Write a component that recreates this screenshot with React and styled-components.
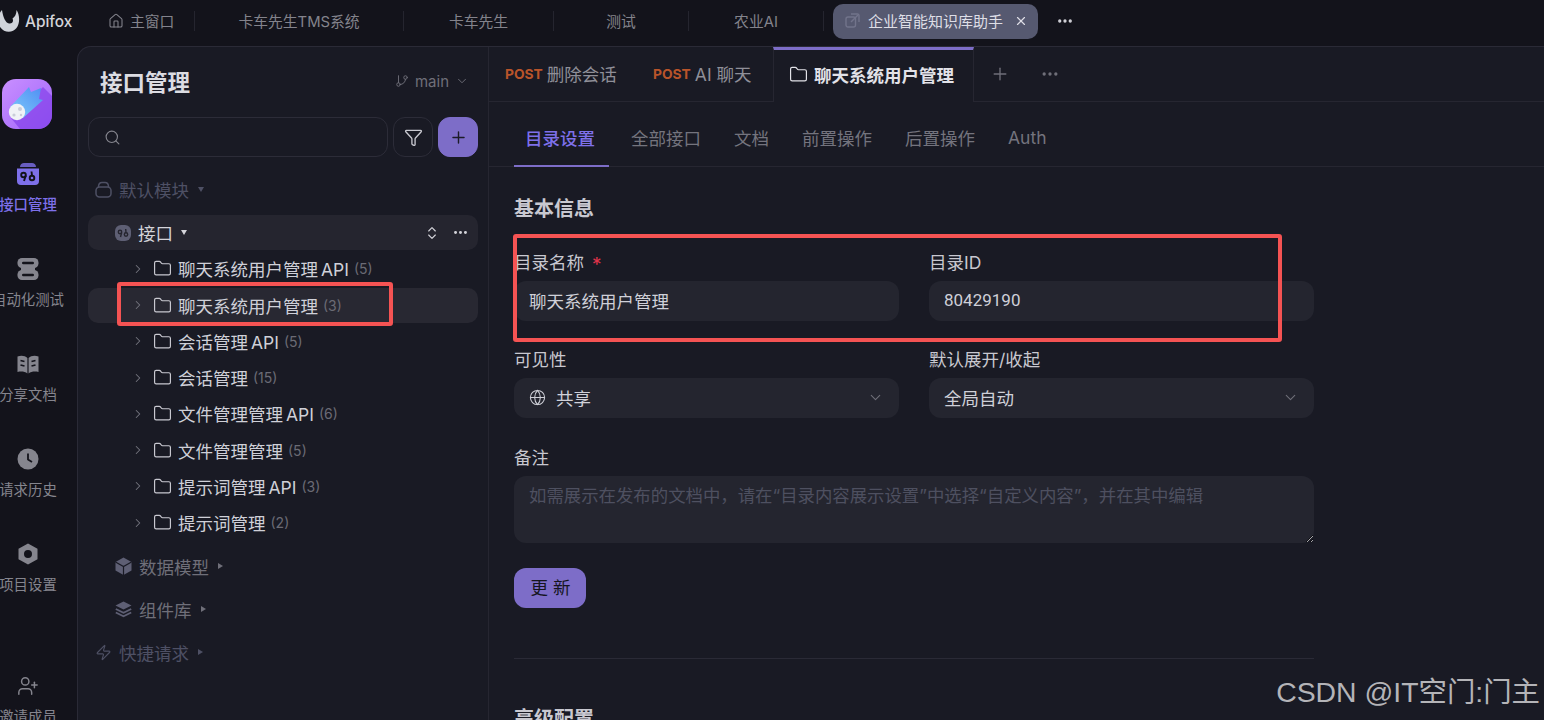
import React from 'react';
import styled, { createGlobalStyle } from 'styled-components';
import {
  ChevronDown,
  ChevronRight,
  ChevronsUpDown,
  Ellipsis,
  Folder,
  Funnel,
  GitBranch,
  Globe,
  House,
  Plus,
  Search,
  UserPlus,
  X,
  Zap,
} from 'lucide-react';

const FONT = `Inter, "Noto Sans CJK SC", "Noto Sans", sans-serif`;

const GlobalStyle = createGlobalStyle`
  html, body {
    margin: 0;
    padding: 0;
    background: #13131b;
    font-family: ${FONT};
  }
  * {
    box-sizing: border-box;
  }
`;

const Root = styled.div`
  position: relative;
  display: flex;
  flex-direction: column;
  width: 100%;
  height: 100vh;
  overflow: hidden;
  background: #13131b;
`;

const TopBar = styled.header`
  display: flex;
  align-items: center;
  flex: none;
  height: 46px;
  padding-bottom: 4px;
  color: #83838c;
  font-size: 14.8px;
`;

const Brand = styled.div`
  display: flex;
  align-items: center;
  flex: none;
  width: 110px;
  gap: 5px;
  margin-left: -2px;
  color: #d4d4da;
  font-size: 15.4px;
  font-weight: 500;
`;

const HomeTab = styled.div`
  display: flex;
  align-items: center;
  flex: none;
  width: 86px;
  gap: 6px;
  padding-bottom: 1px;
`;

const TopTab = styled.div`
  flex: none;
  width: ${(p) => p.$width}px;
  padding-bottom: 1px;
  text-align: center;
  white-space: nowrap;
`;

const TopDivider = styled.span`
  flex: none;
  width: 1px;
  height: 20px;
  background: #25252f;
`;

const ActiveTopTab = styled.div`
  display: flex;
  align-items: center;
  flex: none;
  width: 205px;
  height: 35px;
  margin-left: 9px;
  padding: 0 0 1px 12px;
  gap: 8px;
  border-radius: 10px;
  background: #565970;
  color: #dedee6;
  font-size: 15px;
  white-space: nowrap;
`;

const TopClose = styled(X)`
  margin-left: 3px;
  color: #dedee6;
`;

const TopMore = styled(Ellipsis)`
  margin-left: 18px;
  color: #d4d4da;
`;

const Body = styled.div`
  display: flex;
  flex: 1;
  min-height: 0;
`;

const Rail = styled.nav`
  display: flex;
  flex-direction: column;
  flex: none;
  width: 77px;
  padding-top: 33px;
  overflow: hidden;
`;

const AppLogo = styled.svg`
  display: block;
  flex: none;
  margin-left: 2px;
  margin-bottom: 33px;
`;

const RailItem = styled.div`
  display: flex;
  flex-direction: column;
  align-items: center;
  flex: none;
  width: 56px;
  height: 95px;
  margin-top: ${(p) => p.$offset || 0}px;
  gap: 9px;
  color: ${(p) => (p.$active ? '#7e70ea' : '#85858e')};
`;

const RailIcon = styled.span`
  display: flex;
  align-items: center;
  justify-content: center;
  height: 24px;
`;

const RailLabel = styled.span`
  font-size: 14.4px;
  font-weight: ${(p) => (p.$active ? 500 : 400)};
  line-height: 20px;
  white-space: nowrap;
`;

const Workspace = styled.div`
  display: flex;
  flex: 1;
  min-width: 0;
  border-top: 1px solid #2a2a36;
  border-left: 1px solid #2a2a36;
  border-top-left-radius: 14px;
  background: #191a24;
`;

const TreePane = styled.aside`
  flex: none;
  width: 411px;
  padding: 0 10px;
  border-right: 1px solid #262631;
`;

const PaneHeader = styled.div`
  display: flex;
  align-items: center;
  justify-content: space-between;
  height: 70px;
  padding: 0 9px 2px 12px;
`;

const PaneTitle = styled.h2`
  margin: 0;
  color: #dcdce2;
  font-size: 22.5px;
  font-weight: 600;
`;

const BranchPicker = styled.div`
  display: flex;
  align-items: center;
  gap: 6px;
  color: #6f6f79;
  font-size: 15px;
`;

const SearchRow = styled.div`
  display: flex;
  gap: 5px;
`;

const SearchBox = styled.div`
  display: flex;
  align-items: center;
  width: 300px;
  height: 40px;
  padding-left: 15px;
  border: 1px solid #2c2c38;
  border-radius: 12px;
  color: #85858e;
`;

const IconButton = styled.button`
  display: flex;
  align-items: center;
  justify-content: center;
  width: 40px;
  height: 40px;
  padding: 0;
  border: 1px solid ${(p) => (p.$primary ? '#7d6dc8' : '#2c2c38')};
  border-radius: 12px;
  background: ${(p) => (p.$primary ? '#7d6dc8' : 'transparent')};
  color: ${(p) => (p.$primary ? '#1c1c28' : '#c8c8d0')};
`;

const Section = styled.div`
  display: flex;
  align-items: center;
  height: 36px;
  margin-top: ${(p) => p.$top || 0}px;
  padding-left: ${(p) => (p.$inner ? 27 : 7)}px;
  gap: 7px;
  color: ${(p) => (p.$inner ? '#6f6f79' : '#4e5064')};
  font-size: 17.5px;
`;

const Caret = styled.span`
  width: 0;
  height: 0;
  margin-left: ${(p) => p.$gap || 2}px;
  border-style: solid;
  border-width: ${(p) =>
    p.$down ? '5px 3.5px 0 3.5px' : '3.5px 0 3.5px 5px'};
  border-color: ${(p) =>
    p.$down
      ? 'currentColor transparent transparent transparent'
      : 'transparent transparent transparent currentColor'};
`;

const ModuleRow = styled.div`
  display: flex;
  align-items: center;
  height: 35px;
  margin-top: 8px;
  margin-bottom: 1.25px;
  padding: 0 9px 0 27px;
  gap: 7px;
  border-radius: 10px;
  background: #25252f;
  color: #d4d4da;
  font-size: 17.5px;
`;

const ModuleActions = styled.div`
  display: flex;
  align-items: center;
  margin-left: auto;
  gap: 12px;
`;

const TreeRow = styled.div`
  display: flex;
  align-items: center;
  height: 35px;
  margin-bottom: 1.25px;
  padding-left: 43px;
  border-radius: 10px;
  background: ${(p) => (p.$selected ? '#282832' : 'transparent')};
  color: #cfd0d8;
  font-size: 17.5px;
  word-spacing: -2px;
  white-space: nowrap;
`;

const TreeChevron = styled(ChevronRight)`
  flex: none;
  margin-right: 8px;
  color: #74747e;
`;

const TreeFolder = styled(Folder)`
  flex: none;
  margin-right: 6px;
  color: #c8c8d0;
`;

const TreeCount = styled.span`
  margin-left: 5px;
  color: #6b6b75;
  font-size: 14px;
`;

const Main = styled.main`
  flex: 1;
  min-width: 0;
`;

const DocTabs = styled.div`
  display: flex;
  align-items: stretch;
  height: 55px;
  border-bottom: 1px solid #262631;
`;

const DocTab = styled.div`
  display: flex;
  align-items: center;
  flex: none;
  width: ${(p) => p.$width}px;
  padding: 0 0 2px 16px;
  gap: 4px;
  color: #8f8f98;
  font-size: 17.5px;
  white-space: nowrap;
`;

const Method = styled.span`
  margin-top: 2px;
  color: #b9542a;
  font-size: 13.8px;
  font-weight: 700;
`;

const ActiveDocTab = styled.div`
  display: flex;
  align-items: center;
  flex: none;
  width: 201px;
  margin-bottom: -1px;
  padding: 0 0 3px 15px;
  gap: 6px;
  border-top: 3px solid #7d6dc8;
  border-left: 1px solid #262631;
  border-right: 1px solid #262631;
  background: #191a24;
  color: #e2e2e8;
  font-size: 17.5px;
  font-weight: 600;
  white-space: nowrap;
`;

const DocTabTool = styled.span`
  display: flex;
  align-items: center;
  margin-left: ${(p) => p.$gap}px;
  color: #6f6f79;
`;

const SubTabs = styled.div`
  display: flex;
  height: 65px;
  padding-left: 25px;
  gap: 11px;
  border-bottom: 1px solid #262631;
`;

const SubTab = styled.div`
  display: flex;
  align-items: center;
  height: 65px;
  padding: 8px ${(p) => (p.$active ? 14 : 11)}px 0 11px;
  border-bottom: 2px solid ${(p) => (p.$active ? '#7d6dc8' : 'transparent')};
  color: ${(p) => (p.$active ? '#7e70ea' : '#74747e')};
  font-size: 17.5px;
  font-weight: ${(p) => (p.$active ? 500 : 400)};
`;

const Content = styled.div`
  width: 825px;
  padding: 28px 0 0 25px;
`;

const Heading = styled.h3`
  margin: 0 0 27px;
  color: #c8c8d0;
  font-size: 20px;
  font-weight: 600;
  line-height: 28px;
  white-space: nowrap;
`;

const FormGrid = styled.div`
  display: grid;
  grid-template-columns: 385px 385px;
  column-gap: 30px;
  row-gap: 26px;
`;

const Field = styled.div`
  display: flex;
  flex-direction: column;
  margin-top: ${(p) => p.$top || 0}px;
`;

const Label = styled.label`
  height: 24px;
  margin-bottom: 7px;
  color: #c8c8d0;
  font-size: 17.5px;
  line-height: 26px;
  white-space: nowrap;
`;

const Required = styled.span`
  margin-left: 8px;
  color: #e0334a;
  font-size: 19px;
  vertical-align: -2px;
`;

const TextInput = styled.input`
  width: 100%;
  height: 40px;
  padding: 0 15px 2px;
  border: 0;
  border-radius: 12px;
  outline: 0;
  background: #24252f;
  color: #cfd0d8;
  font-family: ${(p) => (p.$numeric ? 'Roboto, sans-serif' : FONT)};
  font-size: ${(p) => (p.$numeric ? 17 : 17.5)}px;
`;

const SelectBox = styled.div`
  display: flex;
  align-items: center;
  height: 40px;
  padding: 0 15px 2px;
  gap: 10px;
  border-radius: 12px;
  background: #24252f;
  color: #cfd0d8;
  font-size: 17.5px;
`;

const SelectArrow = styled(ChevronDown)`
  margin-left: auto;
  color: #6f6f79;
`;

const NoteArea = styled.textarea`
  display: block;
  width: 800px;
  height: 67px;
  padding: 8px 15px;
  border: 0;
  border-radius: 12px;
  outline: 0;
  background: #24252f;
  color: #cfd0d8;
  font-family: ${FONT};
  font-size: 17.4px;
  line-height: 24px;

  &::placeholder {
    color: #4e5060;
  }
`;

const UpdateButton = styled.button`
  display: block;
  width: 72px;
  height: 40px;
  margin-top: 25px;
  padding: 0 0 3px 6px;
  border: 0;
  border-radius: 12px;
  background: #7d6dc8;
  color: #15151f;
  font-family: ${FONT};
  font-size: 17.5px;
  letter-spacing: 5px;
`;

const Rule = styled.hr`
  width: 800px;
  height: 1px;
  margin: 50px 0 46px;
  border: 0;
  background: #2a2a36;
`;

const Markup = styled.div`
  position: absolute;
  left: ${(p) => p.$x}px;
  top: ${(p) => p.$y}px;
  width: ${(p) => p.$w}px;
  height: ${(p) => p.$h}px;
  border: 4px solid #f55353;
  border-radius: 3px;
  pointer-events: none;
`;

const Watermark = styled.div`
  position: absolute;
  right: 4px;
  top: 674px;
  color: #b4b4b8;
  font-family: "Liberation Sans", "Noto Sans CJK SC", sans-serif;
  font-size: 28.4px;
  line-height: 36px;
  white-space: nowrap;
`;

function FoxMark() {
  return (
    <svg width="22" height="24" viewBox="0 0 22 24">
      <path
        d="M4 1C0 5-1 13 2.5 18.5 6 24 15 24 18.5 19 22 14.500 22 6 18.500 1 18.500 5 17 8 14.500 9.500 16 12.500 14 15 11 14.500 7.500 14 5 8 4 1z"
        fill="#d0d3da"
      />
    </svg>
  );
}

function CometLogo() {
  return (
    <AppLogo width="50" height="50" viewBox="0 0 50 50">
      <defs>
        <linearGradient id="tile" x1="0" y1="0" x2="1" y2="1">
          <stop offset="0" stopColor="#c98fff" />
          <stop offset="1" stopColor="#a065fa" />
        </linearGradient>
        <linearGradient id="tail" x1="1" y1="0" x2="0" y2="1">
          <stop offset="0" stopColor="#4f8df3" />
          <stop offset="1" stopColor="#7fcdfb" />
        </linearGradient>
      </defs>
      <rect width="50" height="50" rx="14" fill="url(#tile)" />
      <path
        d="M41 8 50 17V36A14 14 0 0 1 36 50H18L9 39z"
        fill="#8442ea"
        opacity="0.7"
      />
      <path d="M27 8 29 13 39 9 37 20 41 21 21 39 8 28z" fill="url(#tail)" />
      <circle cx="15" cy="33" r="8.2" fill="#f0f2f6" />
      <circle cx="18" cy="30" r="2" fill="#c9cdd8" />
      <circle cx="12" cy="36" r="1.6" fill="#c9cdd8" />
      <circle cx="19" cy="36" r="1.2" fill="#c9cdd8" />
    </AppLogo>
  );
}

function ApiGlyph() {
  return (
    <svg width="24" height="24" viewBox="0 0 24 24">
      <path d="M4 5C4 2.500 6 1 8 1h8c2 0 4 1.500 4 4z" fill="currentColor" opacity="0.8" />
      <path d="M1 6.500h22V19a4 4 0 0 1-4 4H5a4 4 0 0 1-4-4z" fill="currentColor" />
      <g fill="none" stroke="#13131b" strokeWidth="1.900">
        <circle cx="7.500" cy="13" r="2.300" />
        <path d="M9.800 13.500 8 19" />
        <circle cx="16" cy="16" r="2.300" />
        <path d="M16 13.700 15.500 9.500" />
      </g>
    </svg>
  );
}

function FlowGlyph() {
  return (
    <svg width="24" height="24" viewBox="0 0 24 24">
      <g fill="currentColor">
        <rect x="1.500" y="1" width="21" height="10" rx="4.500" />
        <rect x="1.500" y="13" width="21" height="10" rx="4.500" />
        <rect x="5" y="10" width="14" height="4" />
      </g>
      <g fill="#13131b">
        <rect x="6" y="4.800" width="12" height="2.400" rx="1.200" />
        <rect x="6" y="16.800" width="12" height="2.400" rx="1.200" />
        <rect x="1" y="11" width="3.500" height="2" />
        <rect x="19.500" y="11" width="3.500" height="2" />
      </g>
    </svg>
  );
}

function BookGlyph() {
  return (
    <svg width="22" height="20" viewBox="0 0 22 20">
      <path d="M0.500 2.500C4 1 8 1.500 10.400 4V19.500C8 17.500 4 17 0.500 18z" fill="currentColor" />
      <path d="M21.500 2.500C18 1 14 1.500 11.600 4V19.500C14 17.500 18 17 21.500 18z" fill="currentColor" />
      <path
        d="M3.500 6.500 7.500 7.500M3.500 11 7.500 12M18.500 6.500 14.500 7.500M18.500 11 14.500 12"
        stroke="#13131b"
        strokeWidth="1.700"
        fill="none"
      />
    </svg>
  );
}

function ClockGlyph() {
  return (
    <svg width="22" height="22" viewBox="0 0 22 22">
      <circle cx="11" cy="11" r="10.500" fill="currentColor" />
      <path d="M11 5.500V11.500L15 14" stroke="#13131b" strokeWidth="1.800" fill="none" />
    </svg>
  );
}

function NutGlyph() {
  return (
    <svg width="22" height="24" viewBox="0 0 22 24">
      <path
        fillRule="evenodd"
        d="M11 1.500 20.500 6.800V17.200L11 22.500 1.500 17.200V6.800zM11 8a4 4 0 1 0 0 8 4 4 0 0 0 0-8z"
        fill="currentColor"
      />
    </svg>
  );
}

function DetachedGlyph() {
  return (
    <svg width="15" height="15" viewBox="0 0 15 15" fill="none" stroke="#72748b" strokeWidth="1.400">
      <path d="M6 1H12.500A1.500 1.500 0 0 1 14 2.500V9" />
      <rect x="1" y="4" width="9.500" height="10" rx="2" />
      <path d="M6 9 13 2" />
    </svg>
  );
}

function JarGlyph() {
  return (
    <svg width="17" height="17" viewBox="0 0 17 17" fill="none" stroke="currentColor" strokeWidth="1.500">
      <rect x="1" y="6" width="15" height="10" rx="3.500" />
      <path d="M3.500 6C3.500 3 5 1.500 7 1.500H10C12 1.500 13.500 3 13.500 6" />
    </svg>
  );
}

function ModuleGlyph() {
  return (
    <svg width="16" height="18" viewBox="0 0 16 18">
      <rect y="1" width="16" height="16" rx="6" fill="#5e5f74" />
      <g fill="none" stroke="#25252f" strokeWidth="1.400">
        <circle cx="5" cy="8" r="1.700" />
        <path d="M6.700 8.500 5.500 13" />
        <circle cx="11" cy="10.500" r="1.700" />
        <path d="M11 8.800 10.700 5" />
      </g>
    </svg>
  );
}

function CubeGlyph() {
  return (
    <svg width="17" height="18" viewBox="0 0 17 18">
      <path d="M8.500 0.500 16.500 5V13.500L8.500 18 0.500 13.500V5z" fill="#5e5f74" />
      <path d="M0.500 5 8.500 9.500 16.500 5M8.500 9.500V18" fill="none" stroke="#191a24" strokeWidth="1.200" />
    </svg>
  );
}

function LayersGlyph() {
  return (
    <svg width="17" height="18" viewBox="0 0 17 18">
      <path d="M8.500 1.500 16.500 5.500 8.500 9.500 0.500 5.500z" fill="#5e5f74" />
      <path
        d="M0.800 9 8.500 12.800 16.200 9M0.800 12.500 8.500 16.300 16.200 12.500"
        fill="none"
        stroke="#5e5f74"
        strokeWidth="1.900"
      />
    </svg>
  );
}

const TREE = [
  { name: '聊天系统用户管理 API', count: 5 },
  { name: '聊天系统用户管理', count: 3, selected: true },
  { name: '会话管理 API', count: 5 },
  { name: '会话管理', count: 15 },
  { name: '文件管理管理 API', count: 6 },
  { name: '文件管理管理', count: 5 },
  { name: '提示词管理 API', count: 3 },
  { name: '提示词管理', count: 2 },
];

const SUB_TABS = ['目录设置', '全部接口', '文档', '前置操作', '后置操作', 'Auth'];

function App() {
  return (
    <Root>
      <GlobalStyle />
      <TopBar>
        <Brand>
          <FoxMark />
          Apifox
        </Brand>
        <HomeTab>
          <House size={16} strokeWidth={1.6} />
          主窗口
        </HomeTab>
        <TopDivider />
        <TopTab $width={208}>卡车先生TMS系统</TopTab>
        <TopDivider />
        <TopTab $width={149}>卡车先生</TopTab>
        <TopDivider />
        <TopTab $width={134}>测试</TopTab>
        <TopDivider />
        <TopTab $width={134}>农业AI</TopTab>
        <TopDivider />
        <ActiveTopTab>
          <DetachedGlyph />
          企业智能知识库助手
          <TopClose size={14} strokeWidth={2} />
        </ActiveTopTab>
        <TopMore size={18} strokeWidth={2.4} />
      </TopBar>

      <Body>
        <Rail>
          <CometLogo />
          <RailItem $active>
            <RailIcon><ApiGlyph /></RailIcon>
            <RailLabel $active>接口管理</RailLabel>
          </RailItem>
          <RailItem>
            <RailIcon><FlowGlyph /></RailIcon>
            <RailLabel>自动化测试</RailLabel>
          </RailItem>
          <RailItem>
            <RailIcon><BookGlyph /></RailIcon>
            <RailLabel>分享文档</RailLabel>
          </RailItem>
          <RailItem>
            <RailIcon><ClockGlyph /></RailIcon>
            <RailLabel>请求历史</RailLabel>
          </RailItem>
          <RailItem>
            <RailIcon><NutGlyph /></RailIcon>
            <RailLabel>项目设置</RailLabel>
          </RailItem>
          <RailItem $offset={37}>
            <RailIcon><UserPlus size={22} strokeWidth={1.6} /></RailIcon>
            <RailLabel>邀请成员</RailLabel>
          </RailItem>
        </Rail>

        <Workspace>
          <TreePane>
            <PaneHeader>
              <PaneTitle>接口管理</PaneTitle>
              <BranchPicker>
                <GitBranch size={14} strokeWidth={1.6} />
                main
                <ChevronDown size={14} strokeWidth={1.6} />
              </BranchPicker>
            </PaneHeader>

            <SearchRow>
              <SearchBox>
                <Search size={17} strokeWidth={1.6} />
              </SearchBox>
              <IconButton>
                <Funnel size={19} strokeWidth={1.7} />
              </IconButton>
              <IconButton $primary>
                <Plus size={19} strokeWidth={1.8} />
              </IconButton>
            </SearchRow>

            <Section $top={14}>
              <JarGlyph />
              默认模块
              <Caret $down $gap={2} />
            </Section>

            <ModuleRow>
              <ModuleGlyph />
              接口
              <Caret $down $gap={1} />
              <ModuleActions>
                <ChevronsUpDown size={16} strokeWidth={1.7} />
                <Ellipsis size={17} strokeWidth={2.2} />
              </ModuleActions>
            </ModuleRow>

            {TREE.map((item) => (
              <TreeRow key={item.name} $selected={item.selected}>
                <TreeChevron size={14} strokeWidth={1.8} />
                <TreeFolder size={19} strokeWidth={1.5} />
                {item.name}
                <TreeCount>({item.count})</TreeCount>
              </TreeRow>
            ))}

            <Section $inner $top={8}>
              <CubeGlyph />
              数据模型
              <Caret $gap={2} />
            </Section>
            <Section $inner $top={7}>
              <LayersGlyph />
              组件库
              <Caret $gap={2} />
            </Section>
            <Section $top={7}>
              <Zap size={17} strokeWidth={1.6} />
              快捷请求
              <Caret $gap={2} />
            </Section>
          </TreePane>

          <Main>
            <DocTabs>
              <DocTab $width={148}>
                <Method>POST</Method>
                删除会话
              </DocTab>
              <DocTab $width={136}>
                <Method>POST</Method>
                AI 聊天
              </DocTab>
              <ActiveDocTab>
                <Folder size={19} strokeWidth={1.5} />
                聊天系统用户管理
              </ActiveDocTab>
              <DocTabTool $gap={16}>
                <Plus size={20} strokeWidth={1.6} />
              </DocTabTool>
              <DocTabTool $gap={30}>
                <Ellipsis size={20} strokeWidth={2} />
              </DocTabTool>
            </DocTabs>

            <SubTabs>
              {SUB_TABS.map((tab, i) => (
                <SubTab key={tab} $active={i === 0}>{tab}</SubTab>
              ))}
            </SubTabs>

            <Content>
              <Heading>基本信息</Heading>
              <FormGrid>
                <Field>
                  <Label>目录名称<Required>*</Required></Label>
                  <TextInput defaultValue="聊天系统用户管理" />
                </Field>
                <Field>
                  <Label>目录ID</Label>
                  <TextInput $numeric defaultValue="80429190" />
                </Field>
                <Field>
                  <Label>可见性</Label>
                  <SelectBox>
                    <Globe size={17} strokeWidth={1.5} />
                    共享
                    <SelectArrow size={17} strokeWidth={1.5} />
                  </SelectBox>
                </Field>
                <Field>
                  <Label>默认展开/收起</Label>
                  <SelectBox>
                    全局自动
                    <SelectArrow size={17} strokeWidth={1.5} />
                  </SelectBox>
                </Field>
              </FormGrid>
              <Field $top={27}>
                <Label>备注</Label>
                <NoteArea placeholder="如需展示在发布的文档中，请在“目录内容展示设置”中选择“自定义内容”，并在其中编辑" />
              </Field>
              <UpdateButton>更新</UpdateButton>
              <Rule />
              <Heading>高级配置</Heading>
            </Content>
          </Main>
        </Workspace>
      </Body>

      <Markup $x={117} $y={282} $w={276} $h={44} />
      <Markup $x={513} $y={234} $w={769} $h={108} />
      <Watermark>CSDN @IT空门:门主</Watermark>
    </Root>
  );
}

export default App;
